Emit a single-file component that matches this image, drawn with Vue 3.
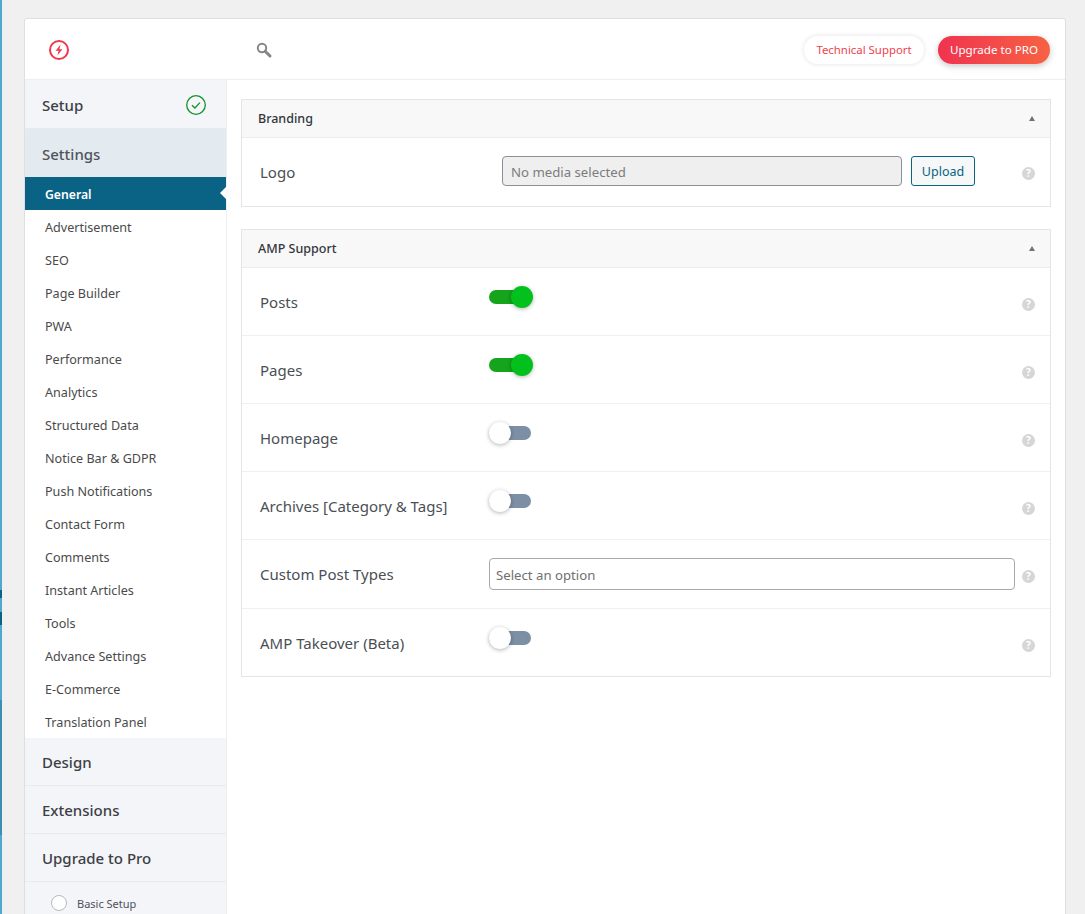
<script setup>
import { ref } from 'vue';

const subItems = ref([
  'General', 'Advertisement', 'SEO', 'Page Builder', 'PWA', 'Performance', 'Analytics',
  'Structured Data', 'Notice Bar & GDPR', 'Push Notifications', 'Contact Form', 'Comments',
  'Instant Articles', 'Tools', 'Advance Settings', 'E-Commerce', 'Translation Panel'
]);

const ampRows = ref([
  { label: 'Posts', type: 'toggle', on: true },
  { label: 'Pages', type: 'toggle', on: true },
  { label: 'Homepage', type: 'toggle', on: false },
  { label: 'Archives [Category & Tags]', type: 'toggle', on: false },
  { label: 'Custom Post Types', type: 'select' },
  { label: 'AMP Takeover (Beta)', type: 'toggle', on: false }
]);
</script>

<template>
  <div class="page">
    <div class="strip"></div>
    <div class="card">
      <header class="topbar">
        <div class="logo">
          <svg width="22" height="22" viewBox="0 0 22 22">
            <circle cx="11" cy="11" r="9" fill="none" stroke="#f0374b" stroke-width="2" />
            <path d="M12.6 5.6 7.6 11.8h3l-1.2 4.6 5-6.2h-3z" fill="#f0374b" />
          </svg>
        </div>
        <div class="search">
          <svg width="18" height="18" viewBox="0 0 18 18">
            <circle cx="7" cy="7" r="4.2" fill="none" stroke="#85868a" stroke-width="2" />
            <path d="M10.2 10.2 15 15" stroke="#85868a" stroke-width="3" stroke-linecap="round" />
          </svg>
        </div>
        <div class="top-actions">
          <a class="btn-support">Technical Support</a>
          <a class="btn-pro">Upgrade to PRO</a>
        </div>
      </header>

      <div class="body">
        <aside class="sidebar">
          <div class="nav-head setup">
            <span>Setup</span>
            <svg width="22" height="22" viewBox="0 0 22 22">
              <circle cx="11" cy="11" r="9.3" fill="none" stroke="#14912a" stroke-width="1.3" />
              <path d="M7 11.2l2.9 2.8 5-5.4" fill="none" stroke="#14912a" stroke-width="1.3" />
            </svg>
          </div>
          <div class="nav-head settings">Settings</div>
          <ul class="sub-list">
            <li v-for="(item, i) in subItems" :key="item" :class="{ active: i === 0 }">{{ item }}</li>
          </ul>
          <div class="nav-head">Design</div>
          <div class="nav-head">Extensions</div>
          <div class="nav-head">Upgrade to Pro</div>
          <div class="basic">
            <span class="radio"></span>
            <span>Basic Setup</span>
          </div>
        </aside>

        <main class="content">
          <section class="panel">
            <div class="panel-head">
              <span>Branding</span>
              <i class="caret"></i>
            </div>
            <div class="row logo-row">
              <div class="row-label">Logo</div>
              <div class="row-field media">
                <div class="media-input">No media selected</div>
                <button class="upload">Upload</button>
              </div>
              <span class="help">?</span>
            </div>
          </section>

          <section class="panel">
            <div class="panel-head">
              <span>AMP Support</span>
              <i class="caret"></i>
            </div>
            <div v-for="row in ampRows" :key="row.label" class="row amp-row" :class="{ 'select-row': row.type === 'select' }">
              <div class="row-label">{{ row.label }}</div>
              <div class="row-field">
                <div v-if="row.type === 'toggle'" class="toggle" :class="{ on: row.on }">
                  <span class="knob"></span>
                </div>
                <div v-else class="select">Select an option</div>
              </div>
              <span class="help">?</span>
            </div>
          </section>
        </main>
      </div>
    </div>
  </div>
</template>

<style>
html, body {
  margin: 0;
  background: #f0f0f0;
  overflow: hidden;
}
</style>

<style scoped>
.page {
  display: flex;
  height: 914px;
  overflow: hidden;
  background: #f0f0f0;
  font-family: "Noto Sans", "Open Sans", sans-serif;
  color: #3c434a;
}
.strip {
  width: 2px;
  flex: none;
  background: linear-gradient(to bottom, #4fa9cf 0, #4fa9cf 590px, #0a6384 590px, #0a6384 598px, #4fa9cf 598px, #4fa9cf 612px, #0a6384 612px, #0a6384 625px, #4fa9cf 625px, #4fa9cf 700px, #3f8fb2 700px, #3f8fb2 835px, #4fa9cf 835px);
}
.card {
  margin: 18px 19px 0 22px;
  flex: 1;
  height: 940px;
  background: #fff;
  border: 1px solid #dfdfdf;
  border-radius: 3px;
  box-sizing: border-box;
}

.topbar {
  display: flex;
  align-items: center;
  height: 61px;
  padding-top: 1px;
  border-bottom: 1px solid #eeeeee;
  box-sizing: border-box;
}
.logo {
  width: 230px;
  padding-left: 23px;
  box-sizing: border-box;
  display: flex;
}
.search {
  display: flex;
}
.top-actions {
  margin-left: auto;
  display: flex;
  gap: 14px;
  padding-right: 15px;
}
.btn-support, .btn-pro {
  height: 28px;
  line-height: 28px;
  border-radius: 14px;
  text-align: center;
}
.btn-support {
  width: 120px;
  background: #fff;
  color: #f0414c;
  font-size: 11.4px;
  box-shadow: 0 0 5px rgba(0, 0, 0, 0.12);
}
.btn-pro {
  width: 112px;
  background: linear-gradient(to right, #ef3350, #f76243);
  color: #fff;
  font-size: 11.6px;
  box-shadow: 0 2px 6px rgba(0, 0, 0, 0.22);
}

.body {
  display: flex;
}
.sidebar {
  width: 202px;
  flex: none;
  border-right: 1px solid #eeeeee;
  box-sizing: border-box;
  height: 860px;
}
.nav-head {
  height: 48px;
  display: flex;
  align-items: center;
  padding-left: 17px;
  background: #f3f5f9;
  border-bottom: 1px solid #e8eaee;
  font-size: 15px;
  font-weight: 500;
  color: #3c3f45;
  box-sizing: border-box;
}
.setup {
  justify-content: space-between;
  padding-right: 19px;
  padding-top: 2px;
  height: 49px;
}
.settings {
  background: #e3eaf0;
  border-bottom: 0;
  padding-top: 2px;
  color: #50555b;
}
.sub-list {
  list-style: none;
  margin: 0;
  padding: 0;
}
.sub-list li {
  height: 33px;
  line-height: 35px;
  padding-left: 20px;
  font-size: 12.6px;
  color: #4a4a4a;
  position: relative;
}
.sub-list li.active {
  background: #0a6384;
  color: #fff;
  font-size: 12.2px;
  font-weight: 600;
}
.sub-list li.active::after {
  content: "";
  position: absolute;
  right: -1px;
  top: 9px;
  border: 7px solid transparent;
  border-right-color: #fff;
  border-left: 0;
}
.basic {
  display: flex;
  align-items: center;
  gap: 10px;
  height: 42px;
  padding: 0 0 0 26px;
  background: #f3f5f9;
  font-size: 11px;
  color: #50505a;
}
.radio {
  width: 14px;
  height: 14px;
  border: 1px solid #b9b9b9;
  border-radius: 50%;
  background: #fff;
}

.content {
  flex: 1;
  padding: 19px 14px 0 14px;
}
.panel {
  border: 1px solid #e5e5e5;
  margin-bottom: 22px;
}
.panel-head {
  display: flex;
  align-items: center;
  justify-content: space-between;
  padding: 0 16px;
  background: #f8f8f8;
  border-bottom: 1px solid #ececec;
  font-size: 12.5px;
  font-weight: 500;
  color: #32373c;
  box-sizing: border-box;
  height: 38px;
}
.caret {
  width: 0;
  height: 0;
  border: 3.5px solid transparent;
  border-bottom: 5px solid #6f7378;
  border-top: 0;
  margin-right: -1px;
}
.row {
  display: flex;
  align-items: center;
  padding-left: 18px;
  position: relative;
  font-size: 15px;
  color: #4a4f55;
}
.logo-row {
  height: 68px;
}
.amp-row {
  height: 68px;
  border-bottom: 1px solid #f0f0f0;
  box-sizing: border-box;
}
.amp-row:last-child {
  height: 67px;
  border-bottom: 0;
}
.select-row {
  height: 69px;
}
.row-label {
  width: 229px;
  flex: none;
}
.row-field {
  flex: none;
  display: flex;
}
.media {
  margin-left: 13px;
  gap: 9px;
  align-items: center;
  padding-bottom: 2px;
}
.media-input {
  width: 400px;
  height: 30px;
  padding-left: 8px;
  box-sizing: border-box;
  background: #efefef;
  border: 1px solid #8c8f94;
  border-radius: 4px;
  font-size: 13.2px;
  color: #7c7c7c;
  line-height: 30px;
}
.upload {
  width: 64px;
  height: 30px;
  background: #f6f7f7;
  border: 1px solid #0a6384;
  border-radius: 3px;
  color: #0a6384;
  font: 12.5px "Noto Sans", sans-serif;
  padding: 0;
}
.toggle {
  position: relative;
  width: 42px;
  height: 14px;
  margin-bottom: 10px;
  border-radius: 7px;
  background: #7c8fa5;
}
.toggle.on {
  background: #16a41c;
}
.knob {
  position: absolute;
  left: 0;
  top: -4px;
  width: 22px;
  height: 22px;
  border-radius: 50%;
  background: #fff;
  box-shadow: 0 1px 4px rgba(0, 0, 0, 0.3);
}
.toggle.on .knob {
  left: 22px;
  background: #03c11c;
}
.select {
  width: 526px;
  height: 32px;
  padding-left: 6px;
  box-sizing: border-box;
  border: 1px solid #a9a9a9;
  border-radius: 4px;
  font-size: 13.2px;
  color: #6f6f6f;
  line-height: 32px;
}
.help {
  position: absolute;
  right: 15px;
  top: 50%;
  margin-top: -4px;
  width: 13px;
  height: 13px;
  border-radius: 50%;
  background: #d6d6d6;
  color: #fff;
  font-size: 10px;
  font-weight: 700;
  line-height: 13px;
  text-align: center;
}
.logo-row .help {
  margin-top: -5px;
}
</style>
